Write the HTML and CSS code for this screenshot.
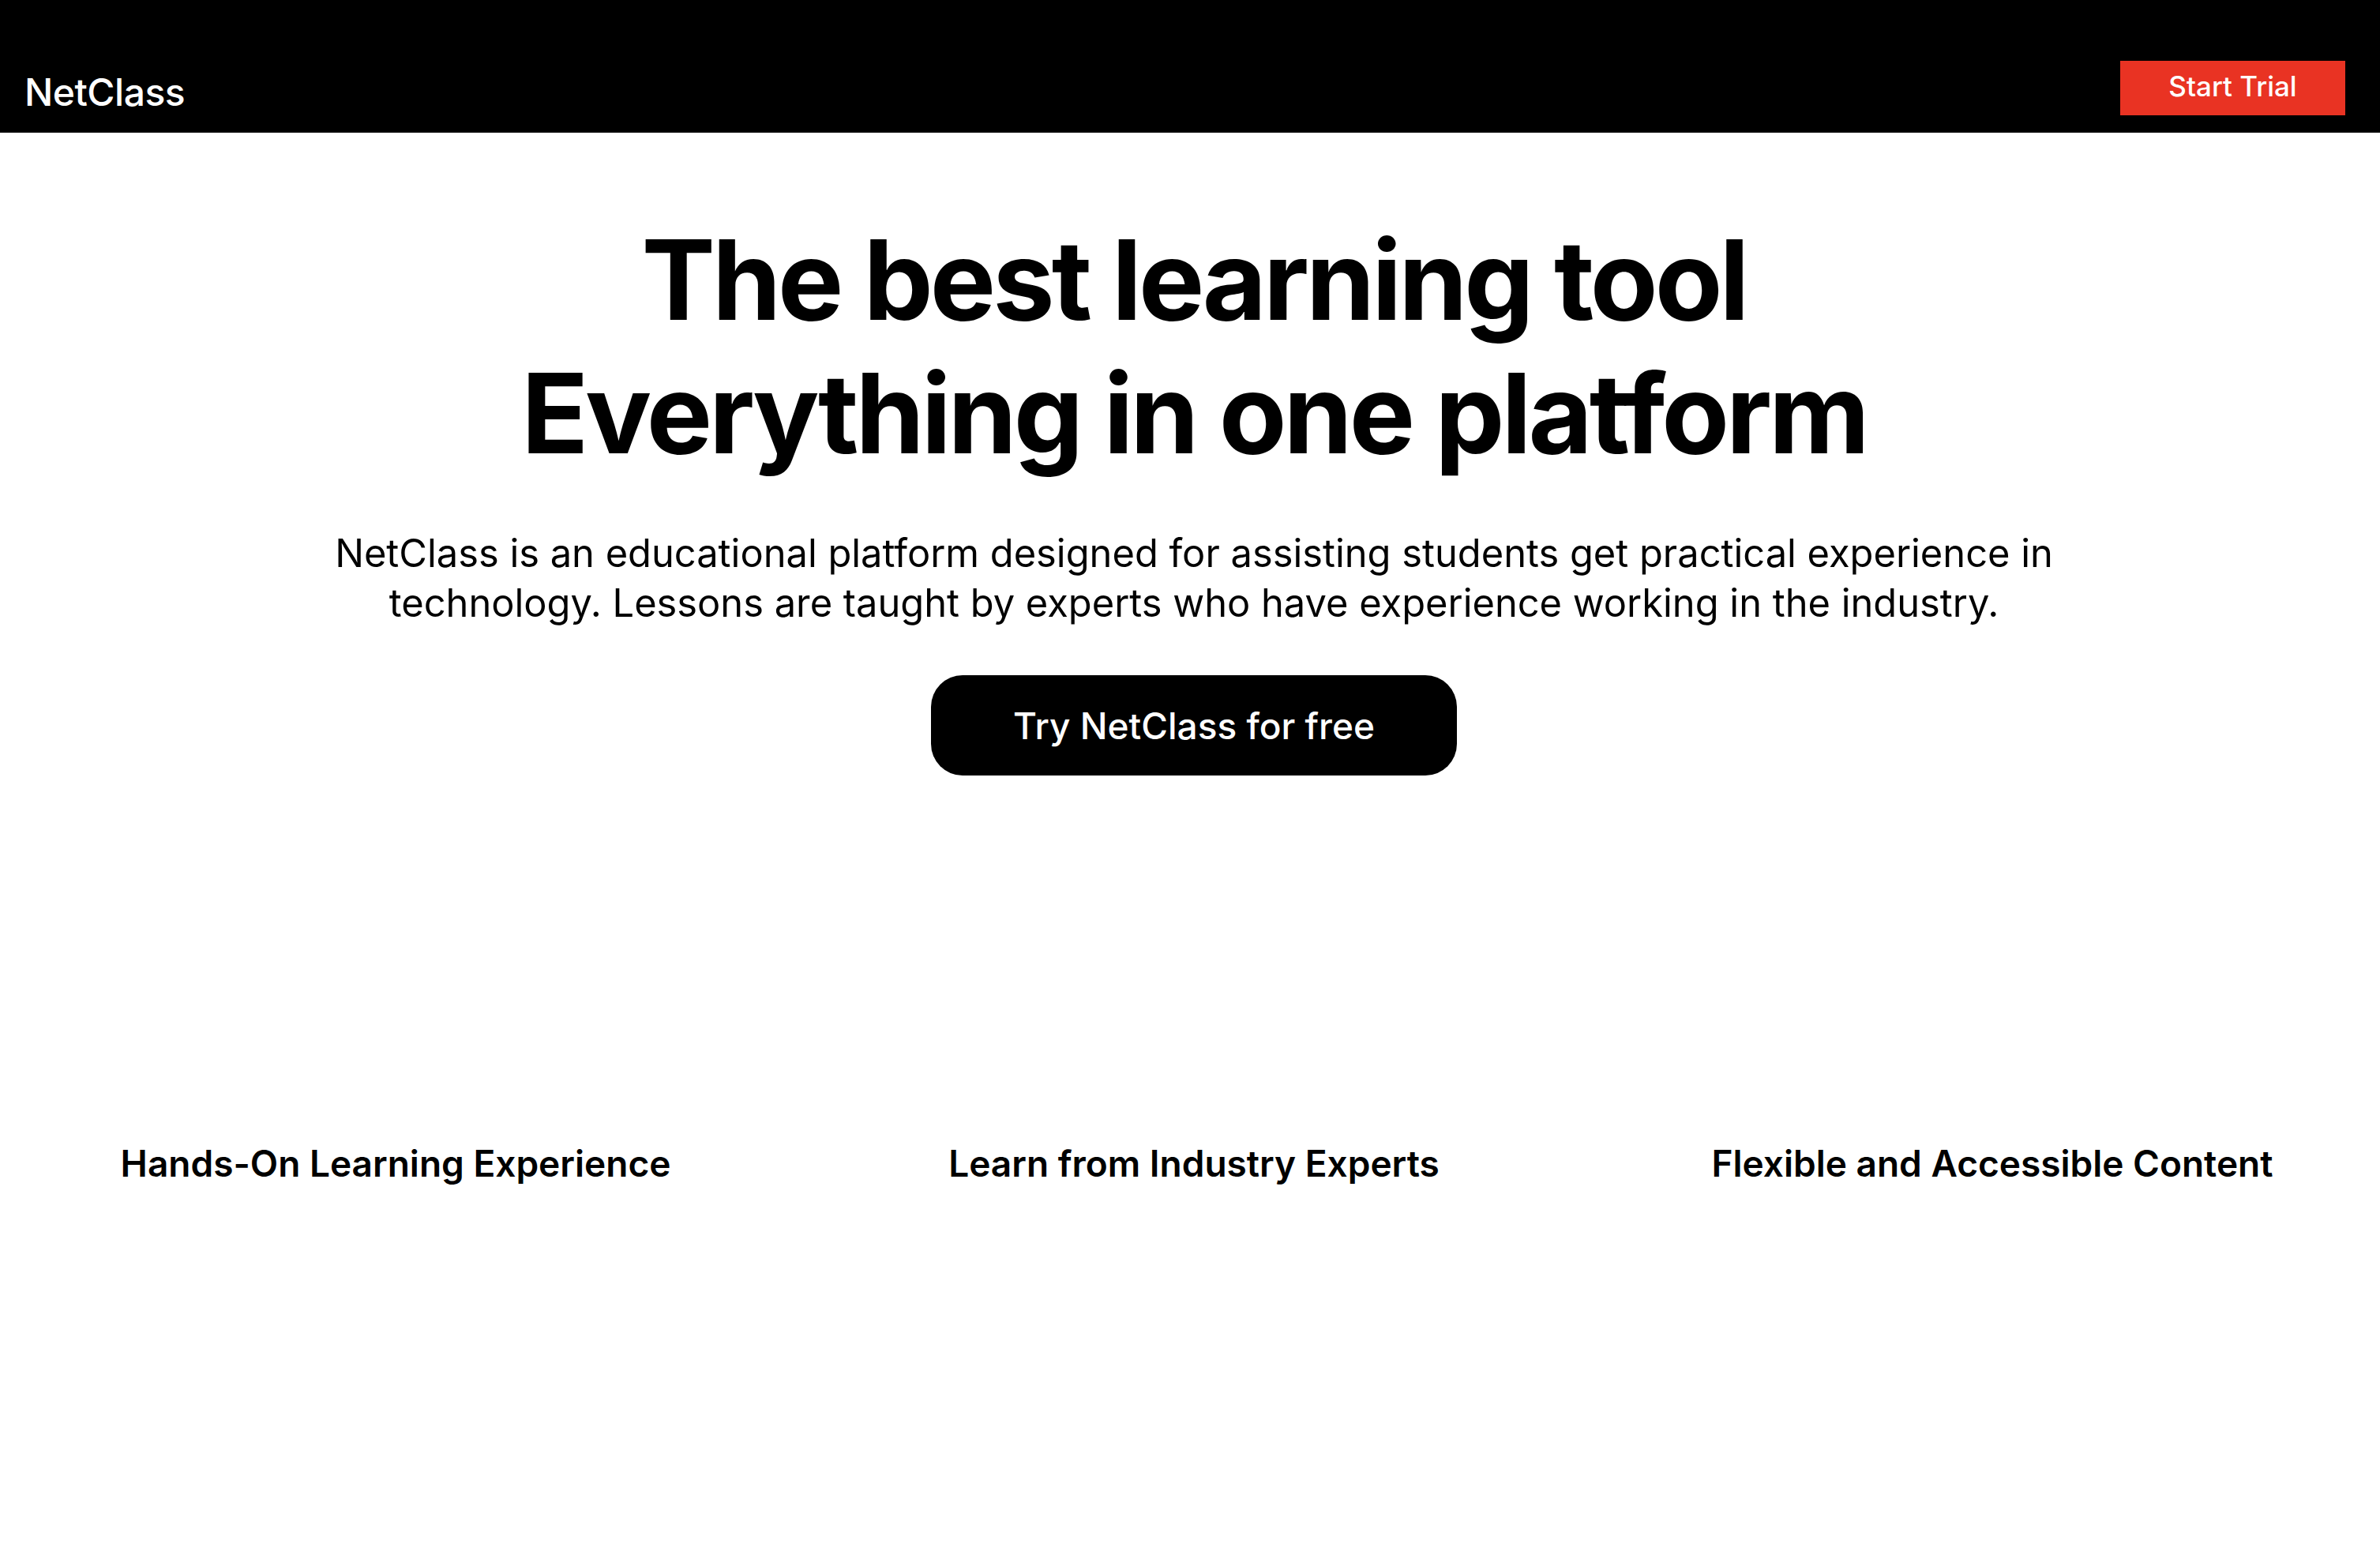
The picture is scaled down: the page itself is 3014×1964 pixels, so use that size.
FILE: index.html
```html
<!DOCTYPE html>
<html lang="en">
<head>
<meta charset="utf-8">
<title>NetClass</title>
<link rel="stylesheet" href="styles.css">
</head>
<body>
<header class="topbar">
  <div class="logo">NetClass</div>
  <a class="trial-btn" href="#">Start Trial</a>
</header>
<main class="content">
  <section class="hero">
    <h1 class="hero-title">The best learning tool<br>Everything in one platform</h1>
    <p class="hero-text">NetClass is an educational platform designed for assisting students get practical experience in technology. Lessons are taught by experts who have experience working in the industry.</p>
    <a class="cta" href="#">Try NetClass for free</a>
  </section>
  <section class="features">
    <div class="feature"><h3 class="feature-title">Hands-On Learning Experience</h3></div>
    <div class="feature"><h3 class="feature-title">Learn from Industry Experts</h3></div>
    <div class="feature"><h3 class="feature-title">Flexible and Accessible Content</h3></div>
  </section>
</main>
</body>
</html>
```
FILE: styles.css
```css
* { box-sizing: border-box; }
html, body { margin: 0; padding: 0; background: #fff; }
body {
  font-family: Inter, "Liberation Sans", sans-serif;
  color: #000;
}
a { text-decoration: none; }

.topbar {
  height: 168px;
  background: #000;
  display: flex;
  justify-content: space-between;
  align-items: flex-end;
  padding: 0 44px 22px 31px;
}
.logo {
  color: #fff;
  font-size: 48px;
  font-weight: 500;
  letter-spacing: -0.5px;
  line-height: 58px;
}
.trial-btn {
  background: #e93323;
  color: #fff;
  width: 285px;
  height: 69px;
  padding-bottom: 5px;
  display: flex;
  align-items: center;
  justify-content: center;
  font-size: 35px;
  font-weight: 500;
}

.content { padding-left: 10px; }

.hero {
  display: flex;
  flex-direction: column;
  align-items: center;
  text-align: center;
  padding-top: 102px;
}
.hero-title {
  margin: 0;
  font-size: 140px;
  line-height: 169px;
  font-weight: 700;
  letter-spacing: -4px;
}
.hero-text {
  margin: 61px 0 0;
  max-width: 2300px;
  font-size: 48.8px;
  line-height: 63px;
  font-weight: 400;
}
.cta {
  margin-top: 60px;
  height: 127px;
  padding: 0 104px;
  border-radius: 40px;
  background: #000;
  color: #fff;
  display: inline-flex;
  align-items: center;
  font-size: 46px;
  font-weight: 500;
}

.features {
  display: grid;
  grid-template-columns: repeat(3, 1fr);
  column-gap: 29px;
  padding-top: 463px;
}
.feature { text-align: center; }
.feature-title {
  margin: 0;
  font-size: 46px;
  line-height: 56px;
  font-weight: 600;
}
```
